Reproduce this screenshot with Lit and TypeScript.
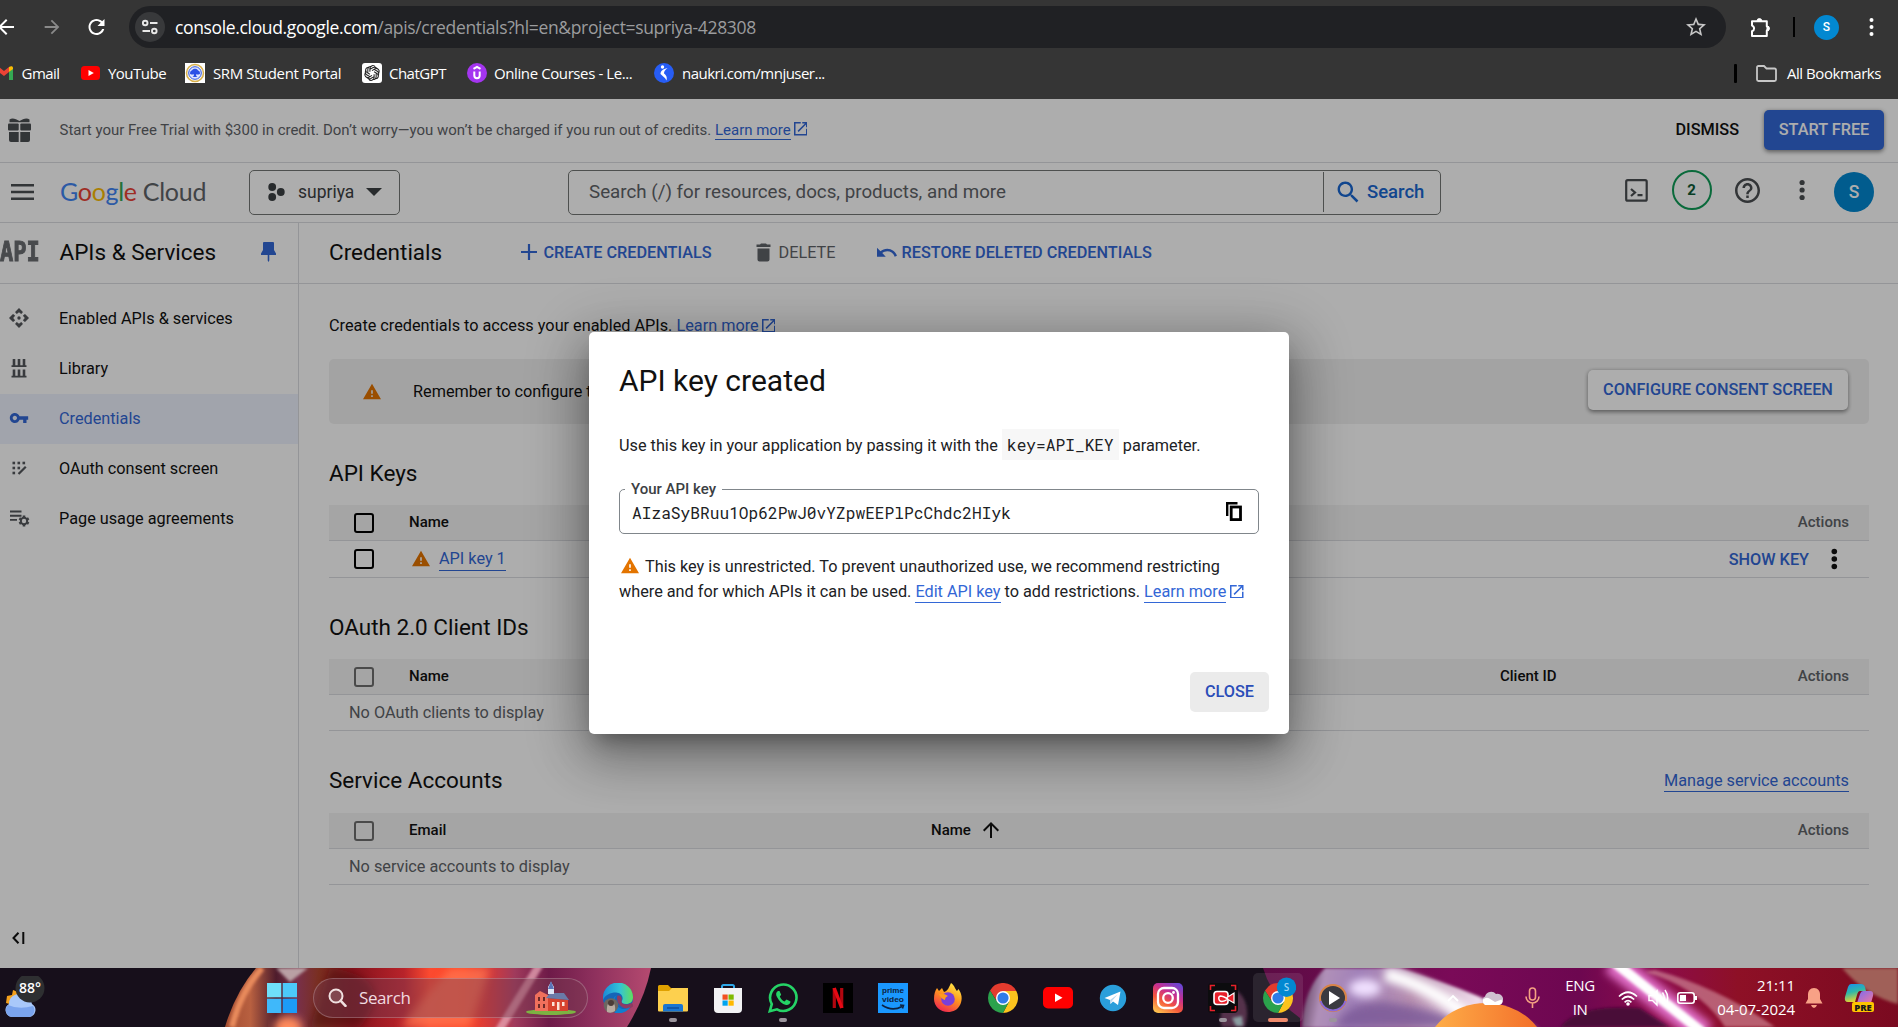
import { LitElement, html, css, svg } from "lit";
import { customElement } from "lit/decorators.js";

const P = {
  back: "M20 11H7.83l5.59-5.59L12 4l-8 8 8 8 1.41-1.41L7.83 13H20v-2z",
  forward: "M12 4l-1.41 1.41L16.17 11H4v2h12.17l-5.58 5.59L12 20l8-8z",
  reload:
    "M17.65 6.35C16.2 4.9 14.21 4 12 4c-4.42 0-7.99 3.58-7.99 8s3.57 8 7.99 8c3.73 0 6.84-2.55 7.73-6h-2.08c-.82 2.33-3.04 4-5.65 4-3.31 0-6-2.69-6-6s2.69-6 6-6c1.66 0 3.14.69 4.22 1.78L13 11h7V4l-2.35 2.35z",
  star: "M22 9.24l-7.19-.62L12 2 9.19 8.63 2 9.24l5.46 4.73L5.82 21 12 17.27 18.18 21l-1.63-7.03L22 9.24zM12 15.4l-3.76 2.27 1-4.28-3.32-2.88 4.38-.38L12 6.1l1.71 4.04 4.38.38-3.32 2.88 1 4.28L12 15.4z",
  open: "M19 19H5V5h7V3H3v18h18v-9h-2v7zM14 3v2h3.59l-9.83 9.83 1.41 1.41L19 6.41V10h2V3h-7z",
  warn: "M1 21h22L12 2 1 21zm12-3h-2v-2h2v2zm0-4h-2v-4h2v4z",
  key: "M12.65 10C11.83 7.67 9.61 6 7 6c-3.31 0-6 2.69-6 6s2.69 6 6 6c2.61 0 4.83-1.67 5.65-4H17v4h4v-4h2v-4H12.65zM7 14.6c-1.4 0-2.6-1.2-2.6-2.6s1.2-2.6 2.6-2.6 2.6 1.2 2.6 2.6-1.2 2.6-2.6 2.6z",
  trash: "M6 19c0 1.1.9 2 2 2h8c1.1 0 2-.9 2-2V8H6v11zM19 4h-3.5l-1-1h-5l-1 1H5v2.5h14V4z",
  search:
    "M15.5 14h-.79l-.28-.27C15.41 12.59 16 11.11 16 9.5 16 5.91 13.09 3 9.5 3S3 5.91 3 9.5 5.91 16 9.5 16c1.61 0 3.09-.59 4.23-1.57l.27.28v.79l5 4.99L20.49 19l-4.99-5zm-6 0C7.01 14 5 11.99 5 9.5S7.01 5 9.5 5 14 7.01 14 9.5 11.99 14 9.5 14z",
  undo: "M12.5 8c-2.65 0-5.05.99-6.9 2.6L2 7v9h9l-3.62-3.62c1.39-1.16 3.16-1.88 5.12-1.88 3.54 0 6.55 2.31 7.6 5.5l2.37-.78C21.08 11.03 17.15 8 12.5 8z",
  help: "M11 18h2v-2h-2v2zm1-16C6.48 2 2 6.48 2 12s4.48 10 10 10 10-4.48 10-10S17.52 2 12 2zm0 18c-4.41 0-8-3.59-8-8s3.59-8 8-8 8 3.59 8 8-3.59 8-8 8zm0-14c-2.21 0-4 1.79-4 4h2c0-1.1.9-2 2-2s2 .9 2 2c0 2-3 1.75-3 5h2c0-2.25 3-2.5 3-5 0-2.21-1.79-4-4-4z",
  up: "M4 12l1.41 1.41L11 7.83V20h2V7.83l5.58 5.59L20 12l-8-8-8 8z",
};

const icon = (d: string, size: number, box = "0 0 24 24") =>
  html`<svg class="ic" width=${size} height=${size} viewBox=${box}><path fill="currentColor" fill-rule="evenodd" d=${d} /></svg>`;

const art = (w: number, h: number, box: string, body: unknown) =>
  html`<svg class="ic" width=${w} height=${h} viewBox=${box}>${body}</svg>`;

const dots = (h: number, r: number, gap: number) =>
  art(2 * r + 1, h, `${-r - 0.5} ${-h / 2} ${2 * r + 1} ${h}`, svg`
    <circle cy=${-gap} r=${r} fill="currentColor"/><circle r=${r} fill="currentColor"/><circle cy=${gap} r=${r} fill="currentColor"/>`);

const chromeBody = svg`
  <path d="M15 8 H28.3 A15 15 0 0 0 2.01 7.5 L9 18.5 Z" fill="#e33b2e"/>
  <path d="M21.1 18.5 L15 30 A15 15 0 0 0 28.3 8 H15 Z" fill="#fcc31e"/>
  <path d="M8.9 18.5 L2.01 7.5 A15 15 0 0 0 15 30 L21.1 18.5 Z" fill="#2ba24c"/>
  <circle cx="15" cy="15" r="7" fill="#fff"/><circle cx="15" cy="15" r="5.6" fill="#2f7ce8"/>`;

const extLink = (text: string) =>
  html`<a class="link">${text}</a><span class="ext">${icon(P.open, 13.5, "3 3 18 18")}</span>`;

@customElement("browser-chrome")
class BrowserChrome extends LitElement {
  static styles = css`
    :host {
      display: block;
      height: 99px;
      background: #353535;
      color: #fff;
      font-family: "Open Sans", "Noto Sans", sans-serif;
      white-space: nowrap;
    }
    .ic { display: block; }
    .bar {
      display: grid;
      grid-template-columns: 44px 43px 42px 1597px 24px 43px 21px 55px 1fr;
      align-items: center;
      height: 42px;
      padding-top: 6px;
    }
    .bar .back { margin-left: -6px; }
    .dim { color: #8a8a8a; margin-left: -3px; }
    .reload { margin-left: -1px; }
    .omni {
      display: grid;
      grid-template-columns: 30px 1505px 1fr;
      align-items: center;
      box-sizing: border-box;
      height: 42px;
      border-radius: 21px;
      padding-left: 6px;
      background: #202124;
    }
    .site {
      display: grid;
      place-items: center;
      width: 30px;
      height: 30px;
      border-radius: 50%;
      background: #38393b;
    }
    .url {
      padding-left: 10px;
      font-size: 17.5px;
      letter-spacing: -0.35px;
      line-height: 24px;
    }
    .url .rest { color: #9b9c9e; }
    .omni .star { color: #c7c7c7; margin-left: 16px; }
    .sep { width: 2px; height: 20px; background: #000; }
    .marks .sep { width: 3px; height: 19px; border-radius: 1px; }
    .ava {
      display: grid;
      place-items: center;
      width: 25px;
      height: 25px;
      border-radius: 50%;
      background: #0288d1;
      font: 500 12px Roboto, sans-serif;
    }
    .marks {
      display: grid;
      grid-template-columns: 21.5px 59.5px 27px 77px 28px 149px 27px 78px 27px 160px 28px 1052px 22px 31px 1fr;
      align-items: center;
      height: 51px;
      box-sizing: border-box;
      padding-bottom: 1px;
      font-size: 15px;
      letter-spacing: -0.52px;
    }
    .marks .cut { margin-left: -5px; }
    .marks .wide { letter-spacing: -0.4px; }
    .marks .last { letter-spacing: -0.46px; }
  `;
  render() {
    return html`
      <div class="bar">
        <span class="back">${icon(P.back, 24)}</span>
        <span class="dim">${icon(P.forward, 22)}</span>
        <span class="reload">${icon(P.reload, 23, "1.5 1 23 23")}</span>
        <div class="omni">
          <span class="site">${art(18, 16, "0 0 18 16", svg`<g fill="none" stroke="#e8e8e8" stroke-width="1.9"><circle cx="4.2" cy="4" r="2.3"/><path d="M9 4H16.5M1.5 12H9"/><circle cx="13.3" cy="12" r="2.3"/></g>`)}</span>
          <span class="url">console.cloud.google.com<span class="rest">/apis/credentials?hl=en&amp;project=supriya-428308</span></span>
          <span class="star">${icon(P.star, 20, "2 2 20 20")}</span>
        </div>
        <span></span>
        <span>${art(21, 22, "0 0 21 22", svg`<path d="M2 5.2H16.8V10.3A2.2 2.2 0 0 1 16.8 14.6V20H2V15.3A3 3 0 0 0 2 9.6Z" fill="none" stroke="#fff" stroke-width="2" stroke-linejoin="round"/><path d="M7 5A2.4 2.4 0 0 1 11.8 5Z" fill="#fff" stroke="#fff"/><path d="M17 10A2.4 2.4 0 0 1 17 14.8Z" fill="#fff" stroke="#fff"/>`)}</span>
        <span class="sep"></span>
        <span class="ava">S</span>
        <span>${dots(22, 2, 7)}</span>
      </div>
      <div class="marks">
        <span class="cut">${art(18, 14, "0 0 18 14", svg`<path d="M0 2V14H4V6Z" fill="#4285f4"/><path d="M14 6V14H18V2Z" fill="#34a853"/><path d="M0 2C0 0 2 -.5 4 1L9 5L14 1V6L9 10L0 3.5Z" fill="#ea4335"/><path d="M14 1C16-.5 18 0 18 2V3L14 6Z" fill="#fbbc04"/>`)}</span>
        <span>Gmail</span>
        <span>${art(19, 14, "0 0 19 14", svg`<rect width="19" height="14" rx="3.5" fill="#f00"/><path d="M7.5 4L12.8 7L7.5 10Z" fill="#fff"/>`)}</span>
        <span>YouTube</span>
        <span>${art(20, 20, "0 0 20 20", svg`<rect width="20" height="20" fill="#fff"/><circle cx="10" cy="10" r="8.5" fill="#f4f4f4" stroke="#d8b04a" stroke-width="1.5"/><circle cx="10" cy="10" r="6.3" fill="#dfe6ff" stroke="#3157e0" stroke-width="1"/><path d="M5 10.5C5 8 6.5 7.5 7 7.5C7.5 5.2 12.5 5.2 13 7.5C14 7.5 15 8.5 15 10.5C15 11.5 12 12 11.2 11V13L12.5 14H7.5L8.8 13V11C8 12 5 11.5 5 10.5Z" fill="#2a50e6"/>`)}</span>
        <span class="wide">SRM Student Portal</span>
        <span>${art(20, 20, "0 0 20 20", svg`<rect width="20" height="20" rx="3" fill="#fff"/><g fill="none" stroke="#222" stroke-width="1.05">${[0, 60, 120, 180, 240, 300].map((a) => svg`<path transform="rotate(${a} 10 10)" d="M7.9 8.8V5.2A2.9 2.9 0 0 1 13.2 3.9M7.9 6.4L11.2 4.5A2.9 2.9 0 0 1 15.3 6.2"/>`)}</g>`)}</span>
        <span>ChatGPT</span>
        <span>${art(20, 20, "0 0 20 20", svg`<circle cx="10" cy="10" r="10" fill="#a435f0"/><path d="M6.5 5.8L10 3.8L13.5 5.8M7.3 8.5V12.5A2.7 2.7 0 0 0 12.7 12.5V8.5" fill="none" stroke="#fff" stroke-width="2"/>`)}</span>
        <span class="wide">Online Courses - Le...</span>
        <span>${art(20, 20, "0 0 20 20", svg`<circle cx="10" cy="10" r="10" fill="#275df5"/><circle cx="8.5" cy="4" r="1.7" fill="#fff"/><path d="M13.5 5C9 6 6.5 8 6.5 11C8 13 11 14 12.5 17.5C13.5 14 12 12 10 10.5C10 8.5 11 7 13.5 5Z" fill="#fff"/>`)}</span>
        <span>naukri.com/mnjuser...</span>
        <span class="sep"></span>
        <span>${art(21, 17, "0 0 21 17", svg`<path d="M1 3V14.5Q1 16 2.5 16H18.5Q20 16 20 14.5V5Q20 3.5 18.5 3.5H10.5L8 1H2.5Q1 1 1 2.5Z" fill="none" stroke="#c7c7c7" stroke-width="1.8"/>`)}</span>
        <span class="last">All Bookmarks</span>
      </div>
    `;
  }
}

@customElement("cloud-console")
class CloudConsole extends LitElement {
  static styles = css`
    :host {
      display: block;
      position: relative;
      height: 869px;
      overflow: hidden;
      background: #fff;
      color: #111;
      font-family: Roboto, sans-serif;
      font-size: 16.25px;
      white-space: nowrap;
    }
    .ic { display: block; }
    .link {
      color: #3367d6;
      line-height: 1.25;
      display: inline-block;
      border-bottom: 1.25px solid #3367d6;
    }
    .ext { display: inline-block; vertical-align: -1px; margin-left: 3px; color: #3367d6; }
    .blue { color: #3367d6; }
    .gray { color: #5f6368; }
    .med { font-weight: 500; }

    .promo {
      display: grid;
      grid-template-columns: 51.5px 1616px 88.5px 120px;
      align-items: center;
      height: 63px;
      padding: 0 14px 0 8px;
      border-bottom: 1px solid #dadce0;
    }
    .promo > * { margin-top: -2px; }
    .promo .msg { color: #5f6368; font-size: 14.98px; margin-top: 0; }
    .btn {
      display: grid;
      place-items: center;
      box-sizing: border-box;
      height: 40px;
      border-radius: 5px;
      font-weight: 500;
      box-shadow: 0 1.5px 4px rgba(0, 0, 0, 0.45);
    }
    .start { background: #3367d6; color: #fff; }

    .top {
      display: grid;
      grid-template-columns: 49px 189px 151px 168.5px 872px 184px 47px 63px 64.5px 35px 40px;
      align-items: center;
      height: 60px;
      padding: 0 0 1px 11px;
      box-sizing: border-box;
      border-bottom: 1px solid #dadce0;
    }
    .logo {
      font-family: Lato, sans-serif;
      font-size: 25px;
      letter-spacing: -0.3px;
      color: #5f6368;
      margin-top: -2px;
    }
    .g1 { color: #4285f4; } .g2 { color: #ea4335; } .g3 { color: #fbbc04; } .g4 { color: #34a853; }
    .pick {
      display: grid;
      grid-template-columns: 30px 68px 1fr;
      align-items: center;
      box-sizing: border-box;
      height: 45px;
      padding: 0 0 1px 18px;
      border: 1.25px solid #747775;
      border-radius: 5px;
      font-size: 17.5px;
      color: #3c4043;
    }
    .find {
      display: grid;
      grid-template-columns: 754px 1fr;
      align-items: center;
      box-sizing: border-box;
      height: 45px;
      margin-left: -0.5px;
      border: 1.25px solid #747775;
      border-radius: 5px;
      font-size: 18.75px;
    }
    .find .ph { padding-left: 20px; color: #5f6368; }
    .find .go {
      display: flex;
      align-items: center;
      gap: 8px;
      height: 40px;
      padding: 0 0 1px 13px;
      box-sizing: border-box;
      border-left: 1.25px solid #747775;
      color: #1a67d2;
      font-weight: 500;
      font-size: 18.5px;
    }
    .tools { color: #4b4e52; }
    .count {
      display: grid;
      place-items: center;
      box-sizing: border-box;
      width: 40px;
      height: 40px;
      border: 2.5px solid #0f9d58;
      border-radius: 50%;
      color: #0b5a35;
      font-weight: 700;
      font-size: 15px;
    }
    .up1 { margin-top: -4px; }
    .me {
      display: grid;
      place-items: center;
      width: 40px;
      height: 40px;
      border-radius: 50%;
      background: #0288d1;
      color: #fff;
      font-size: 17.5px;
      font-weight: 500;
    }

    .body { display: grid; grid-template-columns: 299px 1fr; height: 745px; }
    .side { display: flex; flex-direction: column; border-right: 1px solid #dadce0; }
    .head {
      display: grid;
      align-items: center;
      height: 61px;
      box-sizing: border-box;
      padding-bottom: 2.5px;
      border-bottom: 1px solid #dadce0;
    }
    .side .head { grid-template-columns: 59.5px 201px 1fr; }
    .api {
      font: 700 22px "DejaVu Sans Mono", monospace;
      color: #6b6e72;
      -webkit-text-stroke: 0.8px #6b6e72;
      transform: scaleY(1.2);
    }
    .h1 { font-size: 22.5px; }
    .nav {
      display: grid;
      grid-template-columns: 50px 1fr;
      align-items: center;
      height: 50px;
      box-sizing: border-box;
      padding: 0 0 2px 9px;
    }
    .nav .ic { color: #55585c; }
    .first { margin-top: 10px; }
    .nav.on { background: #edf2fe; color: #3367d6; }
    .nav.on .ic { color: #3367d6; }
    .fold { margin: auto 0 24px 12px; }

    .main .head {
      grid-template-columns: 190.5px 24px 211px 24px 98px 25px 1fr;
      padding-left: 30px;
      padding-bottom: 1.5px;
    }
    .main .h1 { margin-top: -1px; }
    .head .nudge { margin-left: 1.5px; }
    .sheet { display: flex; flex-direction: column; padding: 0 29px 0 30px; }
    .intro { height: 75px; box-sizing: border-box; padding-top: 32px; }
    .note {
      display: grid;
      grid-template-columns: 50px 1175px 260px;
      align-items: center;
      box-sizing: border-box;
      height: 65px;
      padding-left: 34px;
      border-radius: 5px;
      background: #f1f1f1;
    }
    .note .btn { background: #fff; margin-top: -4px; padding-bottom: 1px; }
    .warn { color: #e37400; }
    .sec {
      display: flex;
      justify-content: space-between;
      align-items: center;
      height: 81px;
      box-sizing: border-box;
      padding: 16px 20px 0 0;
      font-size: 22.5px;
    }
    .sec.last { height: 82px; }
    .sec .link { font-size: 16.25px; margin-top: 3px; }
    .th, .tr {
      display: grid;
      grid-template-columns: 55px 522px 569px 1fr;
      align-items: center;
      height: 35px;
      padding: 0 20px 0 25px;
      border-bottom: 1px solid #dadce0;
    }
    .th { background: #f3f3f3; font-weight: 500; font-size: 15px; }
    .th.ids { grid-template-columns: 55px 1091px 1fr auto; }
    .th > span { margin-top: -2px; }
    .tr { grid-template-columns: 58px 27px 1fr auto 18px; }
    .tr.tall { height: 36px; }
    .tr.none { grid-template-columns: 1fr; padding-left: 20px; color: #5f6368; }
    .tr .show { margin-right: 22px; }
    .tr.tall .warn { margin-top: -1px; }
    .tr .name { padding-top: 2px; }
    .th .gray { text-align: right; }
    .sort { display: flex; align-items: center; gap: 12px; }
    .box {
      box-sizing: border-box;
      width: 20px;
      height: 20px;
      border: 2.5px solid #000;
      border-radius: 3px;
    }
    .th .box { margin-top: 1px; }
    .box.off { border-color: #6e6e6e; }

    .shade { position: absolute; inset: 0; background: rgba(0, 0, 0, 0.32); }
    .dialog {
      position: absolute;
      left: 589px;
      top: 233px;
      display: flex;
      flex-direction: column;
      box-sizing: border-box;
      width: 700px;
      height: 402px;
      padding: 0 30px;
      border-radius: 5px;
      background: #fff;
      color: #202124;
      box-shadow: 0 14px 19px -9px rgba(0, 0, 0, 0.3), 0 20px 48px 4px rgba(0, 0, 0, 0.24),
        0 11px 58px 10px rgba(0, 0, 0, 0.2);
    }
    .dialog h2 { margin: 29px 0 0; font-size: 30px; font-weight: 400; line-height: 40px; color: #111; }
    .dialog p { margin: 28px 0 0; line-height: 31px; }
    .chip {
      display: inline-block;
      padding: 0 5px;
      background: #f7f7f7;
    }
    .mono { font-family: "Roboto Mono", "DejaVu Sans Mono", monospace; font-size: 16.2px; }
    .field {
      height: 54px;
      margin: 19px 0 0;
      padding: 0 16px 0 12px;
      border: 1.25px solid #80868b;
      border-radius: 5px;
      box-sizing: border-box;
      min-width: 0;
    }
    .field legend { margin-left: -7px; padding: 0 6px; font-size: 15px; font-weight: 500; line-height: 18px; color: #3c4043; }
    .field .row { display: flex; justify-content: space-between; align-items: center; height: 28px; }
    .field .ic { margin-top: -2px; }
    .dialog .tip { margin-top: 20px; line-height: 25px; }
    .tip .warn { display: inline-block; vertical-align: -3px; margin: 0 6px 0 2px; }
    .tip .link { line-height: 20px; }
    .tip .ext { margin-left: 4px; }
    .close {
      align-self: flex-end;
      display: grid;
      place-items: center;
      box-sizing: border-box;
      width: 79px;
      height: 40px;
      padding-bottom: 1px;
      margin: auto -10px 22px 0;
      border-radius: 5px;
      background: #ebebeb;
      color: #2a4db8;
      font-weight: 500;
    }
  `;
  render() {
    return html`
      <div class="promo">
        <span class="gray">${art(23, 24, "0 0 23 24", svg`<g fill="#4b4e52"><path d="M1.5 1.5Q4-.5 8 1.2L11.5 3L15 1.2Q19-.5 21.5 1.5V4.2H1.5Z"/><rect y="5.6" width="10.7" height="7" rx="1"/><rect x="12.3" y="5.6" width="10.7" height="7" rx="1"/><path d="M1 14H10.7V24H3Q1 24 1 22ZM12.3 14H22V22Q22 24 20 24H12.3Z"/></g>`)}</span>
        <span class="msg">Start your Free Trial with $300 in credit. Don’t worry—you won’t be charged if you run out of credits. ${extLink("Learn more")}</span>
        <span class="med">DISMISS</span>
        <span class="btn start">START FREE</span>
      </div>
      <div class="top">
        <span class="tools">${art(23, 16, "0 0 23 16", svg`<path d="M0 1.2H23M0 8H23M0 14.8H23" stroke="currentColor" stroke-width="2.5"/>`)}</span>
        <span class="logo"><span class="g1">G</span><span class="g2">o</span><span class="g3">o</span><span class="g1">g</span><span class="g4">l</span><span class="g2">e</span> Cloud</span>
        <span class="pick">
          ${art(17, 18, "0 0 17 18", svg`<g fill="#3c4043"><circle cx="4.2" cy="4" r="3.9"/><circle cx="4.2" cy="14" r="3.9"/><circle cx="12.8" cy="9" r="3.9"/></g>`)}
          <span>supriya</span>
          ${art(16, 8, "0 0 16 8", svg`<path d="M0 0H16L8 8Z" fill="#3c4043"/>`)}
        </span>
        <span></span>
        <span class="find"><span class="ph">Search (/) for resources, docs, products, and more</span><span class="go">${icon(P.search, 22, "2.5 2.5 18.5 18.5")}Search</span></span>
        <span></span>
        <span class="tools up1">${art(23, 23, "0 0 23 23", svg`<rect x="1.2" y="1.2" width="20.5" height="20.5" rx="1.5" fill="none" stroke="currentColor" stroke-width="2.2"/><path d="M6 10L10 13.5L6 17M12.5 16.2H17.5" fill="none" stroke="currentColor" stroke-width="2.2"/>`)}</span>
        <span class="count up1">2</span>
        <span class="tools up1">${icon(P.help, 25, "2 2 20 20")}</span>
        <span class="tools up1">${dots(22, 2.6, 7.5)}</span>
        <span class="me">S</span>
      </div>
      <div class="body">
        <div class="side">
          <div class="head">
            <span class="api">API</span>
            <span class="h1">APIs &amp; Services</span>
            <span>${art(15, 20, "0 0 15 20", svg`<path d="M3 0H12Q13 0 13 1V8L15 11.5V13H8.3V18.5L7.5 20L6.7 18.5V13H0V11.5L2 8V1Q2 0 3 0Z" fill="#3367d6"/>`)}</span>
          </div>
          <div class="nav first">${art(20, 20, "0 0 20 20", svg`<g fill="currentColor">${[0, 90, 180, 270].map((a) => svg`<path transform="rotate(${a} 10 10)" d="M10 0L13.7 3.7V4.6L12.2 6.1L10 4.2L7.8 6.1L6.3 4.6V3.7Z"/>`)}<circle cx="10" cy="10" r="1.7"/></g>`)}<span>Enabled APIs &amp; services</span></div>
          <div class="nav">${art(20, 20, "0 0 20 20", svg`<g stroke="currentColor" fill="none"><path d="M2.5 8.2H17.5M2.5 18.7H17.5" stroke-width="1.8"/><path d="M5 1V8M10 1V8M15 1V8M5 11.5V18.5M10 11.5V18.5M15 11.5V18.5" stroke-width="2.6"/></g>`)}<span>Library</span></div>
          <div class="nav on">${icon(P.key, 20)}<span>Credentials</span></div>
          <div class="nav">${art(20, 20, "0 0 20 20", svg`<g fill="currentColor">${[[4.8, 5], [9.8, 5], [14.8, 5], [4.8, 10], [9.8, 10], [4.8, 15]].map(([x, y]) => svg`<rect x=${x - 1.3} y=${y - 1.3} width="2.6" height="2.6"/>`)}</g><path d="M9.5 16L16.8 8.7" stroke="currentColor" stroke-width="2.2"/>`)}<span>OAuth consent screen</span></div>
          <div class="nav">${art(21, 18, "0 0 21 18", svg`<path d="M1 2.5H12.5M1 6.7H12.5M1 10.9H8" stroke="currentColor" stroke-width="1.9"/><circle cx="15" cy="12" r="3.2" fill="none" stroke="currentColor" stroke-width="2"/><path d="M15 6.5V8.5M15 15.5V17.5M10.3 9.3L12 10.3M18 13.7L19.7 14.7M10.3 14.7L12 13.7M18 10.3L19.7 9.3" stroke="currentColor" stroke-width="2.6"/>`)}<span>Page usage agreements</span></div>
          <div class="fold">${art(13, 12, "0 0 13 12", svg`<path d="M6.5 .8L1.5 6L6.5 11.2M11.3 0V12" fill="none" stroke="#111" stroke-width="2"/>`)}</div>
        </div>
        <div class="main">
          <div class="head">
            <span class="h1">Credentials</span>
            <span class="blue nudge">${art(16, 16, "0 0 16 16", svg`<path d="M8 0V16M0 8H16" stroke="currentColor" stroke-width="2.2"/>`)}</span>
            <span class="blue med">CREATE CREDENTIALS</span>
            <span class="gray nudge">${icon(P.trash, 19, "4.5 2.5 19 19")}</span>
            <span class="gray">DELETE</span>
            <span class="blue">${icon(P.undo, 20, "2 1 20.5 20.5")}</span>
            <span class="blue med">RESTORE DELETED CREDENTIALS</span>
          </div>
          <div class="sheet">
            <div class="intro">Create credentials to access your enabled APIs. ${extLink("Learn more")}</div>
            <div class="note">
              <span class="warn">${icon(P.warn, 18, "1 1 22 22")}</span>
              <span>Remember to configure the</span>
              <span class="btn blue">CONFIGURE CONSENT SCREEN</span>
            </div>
            <div class="sec">API Keys</div>
            <div class="th"><span class="box"></span><span>Name</span><span></span><span class="gray">Actions</span></div>
            <div class="tr tall">
              <span class="box"></span><span class="warn">${icon(P.warn, 18, "1 1 22 22")}</span>
              <span class="name"><a class="link">API key 1</a></span>
              <span class="blue med show">SHOW KEY</span><span>${dots(22, 2.8, 7.5)}</span>
            </div>
            <div class="sec">OAuth 2.0 Client IDs</div>
            <div class="th ids"><span class="box off"></span><span>Name</span><span>Client ID</span><span class="gray">Actions</span></div>
            <div class="tr none">No OAuth clients to display</div>
            <div class="sec last">Service Accounts<a class="link">Manage service accounts</a></div>
            <div class="th"><span class="box off"></span><span>Email</span><span class="sort">Name ${icon(P.up, 16, "4 4 16 16")}</span><span class="gray">Actions</span></div>
            <div class="tr none">No service accounts to display</div>
          </div>
        </div>
      </div>
      <div class="shade"></div>
      <div class="dialog">
        <h2>API key created</h2>
        <p>Use this key in your application by passing it with the <span class="chip mono">key=API_KEY</span> parameter.</p>
        <fieldset class="field">
          <legend>Your API key</legend>
          <div class="row"><span class="mono">AIzaSyBRuu1Op62PwJ0vYZpwEEPlPcChdc2HIyk</span>${art(16, 19, "0 0 16 19", svg`<path d="M1.2 14V1.2H11.5" fill="none" stroke="#000" stroke-width="2.4"/><rect x="5.2" y="5" width="9.3" height="12.6" fill="none" stroke="#000" stroke-width="2.8"/>`)}</div>
        </fieldset>
        <p class="tip"><span class="warn">${icon(P.warn, 18, "1 1 22 22")}</span>This key is unrestricted. To prevent unauthorized use, we recommend restricting<br />where and for which APIs it can be used. <a class="link">Edit API key</a> to add restrictions. ${extLink("Learn more")}</p>
        <div class="close">CLOSE</div>
      </div>
    `;
  }
}

@customElement("task-bar")
class TaskBar extends LitElement {
  static styles = css`
    :host {
      display: block;
      position: relative;
      height: 59px;
      background: #170f1b;
      color: #fff;
      font-family: "Open Sans", "Noto Sans", sans-serif;
      white-space: nowrap;
    }
    .wall { position: absolute; inset: 0; display: block; }
    .ic { display: block; }
    .row {
      position: relative;
      display: grid;
      grid-template-columns: 262px 46px 290px repeat(12, 55px) 55px 129px 35px 43px 40px 53px 30px 29px 40px 78px 49px 1fr;
      align-items: center;
      height: 59px;
      padding-left: 5px;
      box-sizing: border-box;
    }
    .pill {
      display: grid;
      grid-template-columns: 31px 167px 1fr;
      align-items: center;
      box-sizing: border-box;
      width: 275px;
      height: 40px;
      padding-left: 14px;
      border: 1px solid rgba(255, 255, 255, 0.22);
      border-radius: 20px;
      background: rgba(120, 60, 80, 0.45);
      font-size: 17px;
      color: #f1dbe0;
      letter-spacing: -0.4px;
    }
    .app {
      display: grid;
      justify-items: center;
      align-items: center;
      width: 30px;
      grid-template-rows: 30px 5px 4px;
      margin-top: 10px;
    }
    .run { grid-row: 3; width: 8px; height: 4px; border-radius: 2px; background: #9b949c; }
    .tile {
      display: grid;
      grid-template-rows: 30px 5px 4px;
      justify-items: center;
      box-sizing: border-box;
      width: 50px;
      height: 49px;
      padding-top: 10px;
      border-radius: 5px;
      background: rgba(255, 255, 255, 0.09);
      margin-left: -10px;
    }
    .tile .ic { margin-top: -6px; }
    .wide { grid-row: 3; width: 20px; height: 4px; border-radius: 2px; background: #f08a6c; }
    .lang, .time { font-size: 15px; line-height: 24px; margin-top: -2px; }
    .lang { text-align: center; width: 30px; letter-spacing: -0.4px; }
    .time { text-align: right; width: 78px; letter-spacing: -0.05px; }
    .bell { padding-left: 10px; }
    .brand { font-family: "Liberation Sans", Arial, sans-serif; font-size: 7.3px; font-weight: 700; }
  `;
  app(body: unknown, run = false, box = "0 0 30 30") {
    return html`<span class="app">${art(30, 30, box, body)}${run ? html`<span class="run"></span>` : ""}</span>`;
  }
  render() {
    return html`
      <svg class="wall" width="1898" height="59" viewBox="0 0 1898 59">
        <defs>
          <linearGradient id="l" gradientUnits="userSpaceOnUse" x1="225" x2="651" y1="0" y2="0">
            <stop offset="0" stop-color="#a34c30"/><stop offset=".06" stop-color="#b86040"/><stop offset=".12" stop-color="#4e1c2c"/><stop offset=".17" stop-color="#78304a"/><stop offset=".22" stop-color="#7a2f20"/>
            <stop offset=".3" stop-color="#85121c"/><stop offset=".42" stop-color="#b8232a"/><stop offset=".48" stop-color="#fb4a30"/><stop offset=".56" stop-color="#ff4526"/><stop offset=".62" stop-color="#d53a3a"/>
            <stop offset=".68" stop-color="#a03a5c"/><stop offset=".76" stop-color="#6e1a48"/><stop offset=".86" stop-color="#8c2f5c"/><stop offset="1" stop-color="#b54a70"/>
          </linearGradient>
          <linearGradient id="r" gradientUnits="userSpaceOnUse" x1="1260" x2="1898" y1="0" y2="0">
            <stop offset="0" stop-color="#5c0c44"/><stop offset=".3" stop-color="#7a0a58"/><stop offset=".5" stop-color="#6d0750"/><stop offset=".62" stop-color="#8c0c4c"/><stop offset=".75" stop-color="#8e1026"/><stop offset="1" stop-color="#7a0a20"/>
          </linearGradient>
          <linearGradient id="s" gradientUnits="userSpaceOnUse" x1="1302" x2="1520" y1="10" y2="50">
            <stop offset="0" stop-color="#5a3a58"/><stop offset=".1" stop-color="#b090b8"/><stop offset=".25" stop-color="#a080b8"/><stop offset=".5" stop-color="#b890b0"/><stop offset=".8" stop-color="#f0dcec"/><stop offset="1" stop-color="#8a4080"/>
          </linearGradient>
          <linearGradient id="o" x1="0" x2="1"><stop offset="0" stop-color="#ffb24a"/><stop offset="1" stop-color="#f26a28"/></linearGradient>
          <filter id="b" x="-20%" y="-50%" width="140%" height="200%"><feGaussianBlur stdDeviation="4"/></filter>
          <filter id="b2" x="-20%" y="-50%" width="140%" height="200%"><feGaussianBlur stdDeviation="1.5"/></filter>
          <clipPath id="cl"><path d="M256 0Q235 25 225 59H627Q645 30 651 0Z"/></clipPath>
          <clipPath id="cr"><path d="M1263 0Q1272 30 1300 50V59H1898V0Z"/></clipPath>
        </defs>
        <g clip-path="url(#cl)">
          <rect x="225" width="430" height="59" fill="url(#l)"/>
          <path d="M262 0Q240 25 232 59" stroke="#e88a5c" stroke-width="6" fill="none" filter="url(#b2)"/>
          <path d="M276 0H308L290 14Z" fill="#b9a0a4" filter="url(#b2)"/>
          <ellipse cx="288" cy="60" rx="14" ry="12" fill="#ff8a5c" filter="url(#b)"/>
          <path d="M330 0Q400 10 360 59H310Z" fill="#4a0c10" opacity=".55" filter="url(#b)"/>
          <path d="M400 59L450 0H490L470 59Z" fill="#ff7a55" opacity=".7" filter="url(#b)"/>
          <path d="M540-4L498 64" stroke="#e8a8b8" stroke-width="8" opacity=".75" filter="url(#b2)"/>
        </g>
        <g clip-path="url(#cr)">
          <rect x="1255" width="650" height="59" fill="url(#r)"/>
          <path d="M1325 0Q1303 22 1302 60H1540Q1500 32 1400 0Z" fill="url(#s)" filter="url(#b2)"/>
          <path d="M1335 59Q1345 34 1385 34Q1440 40 1470 60Z" fill="#7c5a98" opacity=".85" filter="url(#b)"/>
          <ellipse cx="1365" cy="20" rx="16" ry="9" fill="#f0e0ff" filter="url(#b)"/>
          <path d="M1385 6Q1425 16 1465 46" stroke="#fff" stroke-width="14" fill="none" filter="url(#b)"/>
          <ellipse cx="1486" cy="86" rx="60" ry="51" fill="url(#o)"/>
          <path d="M1560 59Q1580 35 1640 40L1670 59Z" fill="#4a0838" filter="url(#b2)"/>
          <path d="M1612-6L1705 66" stroke="#e070c8" stroke-width="24" filter="url(#b)"/>
          <path d="M1614-6L1702 64" stroke="#fff" stroke-width="10" filter="url(#b2)"/>
          <path d="M1655 2Q1720 20 1775 59H1725Q1700 20 1645 4Z" fill="#d08a98" opacity=".65" filter="url(#b2)"/>
          <path d="M1842 0Q1866 28 1898 36V0Z" fill="#a06058" filter="url(#b2)"/>
        </g>
        <path d="M1222 59Q1216 40 1236 22Q1252 34 1245 59Z" fill="#54304c" filter="url(#b2)"/>
        <path d="M1232 50L1242 48L1243 58H1236Z" fill="#8a9ca0" filter="url(#b2)"/>
      </svg>
      <div class="row">
        <span>${art(42, 44, "0 0 42 44", svg`<path d="M2 20L7 19L8 14L13 16L18 20L8 29L1 27Z" fill="#f5a11c"/><path d="M7 41A7 7 0 0 1 4 28A10 10 0 0 1 22 22A8 8 0 0 1 27 28A7 7 0 0 1 24 41Z" fill="#a9c8fa"/><path d="M7 41A7 7 0 0 1 3 29Q14 34 28 30A7 7 0 0 1 24 41Z" fill="#7ba4ee"/><circle cx="25" cy="12" r="14.5" fill="#2e2f31"/><text x="25" y="17" text-anchor="middle" font-size="14" font-weight="600" fill="#fff">88°</text>`)}</span>
        <span>${art(30, 30, "0 0 30 30", svg`<rect width="14.3" height="14.3" fill="#6fe0fb"/><rect x="15.7" width="14.3" height="14.3" fill="#4cc9fa"/><rect y="15.7" width="14.3" height="14.3" fill="#3fb8fa"/><rect x="15.7" y="15.7" width="14.3" height="14.3" fill="#1c9bf7"/>`)}</span>
        <span class="pill">
          ${art(19, 19, "0 0 19 19", svg`<circle cx="8" cy="8" r="6.5" fill="rgba(255,255,255,.15)" stroke="#f0e0e0" stroke-width="2"/><path d="M12.8 12.8L17.5 17.8" stroke="#f0e0e0" stroke-width="2.6" stroke-linecap="round"/>`)}
          <span>Search</span>
          ${art(50, 34, "0 0 50 34", svg`<ellipse cx="25" cy="31" rx="25" ry="3" fill="#7cb342"/><path d="M9 30V14L14 10L22 14V30Z" fill="#f0705c"/><path d="M22 30V17L42 19V30Z" fill="#d8432f"/><path d="M20 17L24 12H38L43 19Z" fill="#6a7aa8"/><path d="M22 13V6L25 1L28 6V13Z" fill="#dce4f4"/><path d="M22 8L25 0L28 8Z" fill="#5a74b8"/><g fill="#6c2a28"><rect x="12" y="16" width="2" height="4"/><rect x="17" y="16" width="2" height="4"/><rect x="12" y="23" width="2" height="4"/><rect x="17" y="23" width="2" height="4"/></g><g fill="#fbe3d8"><rect x="26" y="21" width="2.5" height="4"/><rect x="31" y="21" width="2.5" height="8"/><rect x="36" y="21" width="2.5" height="4"/></g>`)}
        </span>
        ${this.app(svg`<defs><linearGradient id="e1" x1="0" x2="1"><stop offset="0" stop-color="#1b8ad6"/><stop offset=".55" stop-color="#32c3d8"/><stop offset="1" stop-color="#62e05c"/></linearGradient></defs><circle cx="15" cy="15" r="15" fill="#1565b8"/><path d="M0 15A15 15 0 0 1 30 14C30 19 27 21 23 21C19 21 18 19 19 17.5C21 14 18 9.5 13 9.5C7 9.5 2 12 0 17Z" fill="url(#e1)"/><path d="M14.5 12.5C19 12 19 16 18.5 18C18 20.5 21 22 25 21.5L28.5 20L31 23L26 26C19 26 12 20 14.5 12.5Z" fill="#8f3a62"/><path d="M14 12C10 15 11 23 18 25.5Q22 27 27.5 24A15 15 0 0 1 12 29.7C8 24 8 15 14 12Z" fill="#0f7fd0"/><circle cx="8" cy="22.5" r="7.3" fill="#6c6660"/><path d="M4 29Q3 20 8 18Q13 20 12 28Q8 31 4 29Z" fill="#b8aaa0"/><circle cx="8" cy="20" r="3" fill="#4a3c38"/>`)}
        ${this.app(svg`<path d="M0 3.5Q0 2 1.5 2H10L13 5H28.5Q30 5 30 6.5V12H0Z" fill="#e0a100"/><path d="M0 8H11L14 5H30V27.5Q30 28.5 29 28.5H1Q0 28.5 0 27.5Z" fill="#fdd04e"/><path d="M5 28.5V23Q5 21 7 21H23Q25 21 25 23V28.5Z" fill="#1976d2"/><path d="M9 25H21" stroke="#0d4f9e" stroke-width="1.5"/>`, true)}
        ${this.app(svg`<path d="M9 6V3.5Q9 2 10.5 2H19.5Q21 2 21 3.5V6" fill="none" stroke="#2fa8e8" stroke-width="2"/><path d="M1 5H29V26Q29 30 25 30H5Q1 30 1 26Z" fill="#f2f2f4"/><rect x="9.5" y="11.5" width="5.2" height="5.2" fill="#f25022"/><rect x="15.5" y="11.5" width="5.2" height="5.2" fill="#7fba00"/><rect x="9.5" y="17.5" width="5.2" height="5.2" fill="#00a4ef"/><rect x="15.5" y="17.5" width="5.2" height="5.2" fill="#ffb900"/>`)}
        ${this.app(svg`<path d="M1.8 28.2L3.8 21.2A13.2 13.2 0 1 1 9 26.3Z" fill="none" stroke="#25d366" stroke-width="2.6"/><path d="M10 8C8 9 7.5 11.5 9 14C11 18 14 21 18 22C20 22.5 22.5 21 22.5 18.5L18.5 16.5L16.5 18.5C14.5 17.7 12.5 15.5 11.8 13.5L13.2 11.8L11.5 8Z" fill="#25d366"/>`, true)}
        ${this.app(svg`<rect width="30" height="30" fill="#000"/><path d="M11.3 5V25M18.7 5V25" stroke="#b1060f" stroke-width="3.2"/><path d="M11.2 5L18.8 25" stroke="#e50914" stroke-width="3.5"/>`)}
        ${this.app(svg`<rect width="30" height="30" fill="#1a98ff"/><text class="brand" x="15" y="10" text-anchor="middle" fill="#0d2240" textLength="22" lengthAdjust="spacingAndGlyphs">prime</text><text class="brand" x="15" y="19" text-anchor="middle" fill="#0d2240" textLength="22" lengthAdjust="spacingAndGlyphs">video</text><path d="M4 22Q14 29 24 23.5M22 22L25.5 22.5L24.5 25.5" fill="none" stroke="#0d2240" stroke-width="1.6"/>`)}
        ${this.app(svg`<defs><linearGradient id="f1" x1=".8" x2=".3" y1="0" y2="1"><stop offset="0" stop-color="#fff04a"/><stop offset=".45" stop-color="#ff9a1e"/><stop offset="1" stop-color="#f0264f"/></linearGradient></defs><path d="M18 0C22 3 22 6 24 8L25.5 6C29 11 29.5 16 27.5 21C25 27 20 29 15 29C7 29 1 23 1 16C1 11 2 8 4 5L6 8L9 5L11 9C15 8 16 4 18 0Z" fill="url(#f1)"/><circle cx="15" cy="16" r="6.8" fill="#7a3fd8"/><path d="M6 11Q11 10 15 13Q12 14 12 17Q8 16 6 11Z" fill="#ff9a1e"/>`)}
        ${this.app(chromeBody)}
        ${this.app(svg`<rect y="4" width="30" height="21.5" rx="5" fill="#f00"/><path d="M12 10.5L19.5 14.8L12 19Z" fill="#fff"/>`)}
        ${this.app(svg`<circle cx="15" cy="15" r="13.2" fill="#2a9fdb"/><path d="M6.5 15L22.5 8.5L20 22L15 18.5L12.5 21L12 17Z" fill="#fff"/><path d="M12 17L19.5 11.5L14 18L12.5 21Z" fill="#b8d8ee"/>`)}
        ${this.app(svg`<defs><linearGradient id="i1" x1=".2" x2=".8" y1="1" y2="0"><stop offset="0" stop-color="#fdc04e"/><stop offset=".35" stop-color="#f5563a"/><stop offset=".65" stop-color="#c92f8e"/><stop offset="1" stop-color="#6a45d4"/></linearGradient></defs><rect width="30" height="30" rx="5" fill="url(#i1)"/><rect x="5" y="5" width="20" height="20" rx="6" fill="none" stroke="#fff" stroke-width="2.3"/><circle cx="15" cy="15" r="4.8" fill="none" stroke="#fff" stroke-width="2.3"/><circle cx="20.5" cy="9.5" r="1.4" fill="#fff"/>`)}
        ${this.app(svg`<rect width="30" height="30" rx="4" fill="#0c0c0e"/><path d="M2.5 7V2.5H7M23 2.5H27.5V7M2.5 23V27.5H7M23 27.5H27.5V23" stroke="#e8202a" stroke-width="1.6" fill="none"/><rect x="6" y="8.5" width="14" height="13" rx="3" fill="#e8202a" stroke="#fff" stroke-width="1.6"/><path d="M19 14.5L26 10V20L19 16Z" fill="#e8202a" stroke="#fff" stroke-width="1.2"/><path d="M20 16Q14 20 11.5 17.5Q9.5 14 12.5 13Q15 13 20 16" fill="none" stroke="#fff" stroke-width="1.5"/>`, true)}
        <span class="tile">${art(36, 36, "-3 -6 36 36", svg`${chromeBody}<circle cx="23.5" cy="4.2" r="9.7" fill="#0288d1"/><text x="23.5" y="8" text-anchor="middle" font-size="10" font-weight="600" fill="#9fd4f4">S</text>`)}<span class="wide"></span></span>
        ${this.app(svg`<circle cx="15" cy="15" r="13" fill="#3a3a40" stroke="#d88448" stroke-width="2"/><path d="M2.5 18A13 13 0 0 0 27.5 18" fill="none" stroke="#8a68d8" stroke-width="2"/><path d="M11 8L22 15L11 22Z" fill="#fff"/>`, true)}
        <span>${art(12, 8, "0 0 12 8", svg`<path d="M1 7L6 2L11 7" fill="none" stroke="#fff" stroke-width="1.8"/>`)}</span>
        <span>${art(21, 14, "0 0 21 14", svg`<path d="M4 14A4.5 4.5 0 0 1 3 5.5A6.5 6.5 0 0 1 14 3A5.5 5.5 0 0 1 17 14Z" fill="#cfc0cf"/><path d="M3 14Q0 12 1 8.5Q5 5 9 8.5L13 11L19.5 8.5Q22 13 17 14Z" fill="#fff"/>`)}</span>
        <span>${art(15, 22, "0 0 15 22", svg`<rect x="4.5" y="1" width="6" height="12" rx="3" fill="none" stroke="#f5a182" stroke-width="1.6"/><path d="M1 9.5A6.5 6.5 0 0 0 14 9.5M7.5 16V21" fill="none" stroke="#f5a182" stroke-width="1.6"/>`)}</span>
        <span class="lang">ENG<br />IN</span>
        <span>${art(20, 16, "0 0 20 16", svg`<path d="M1 6.5Q10-2 19 6.5M3.8 9.5Q10 3.5 16.2 9.5M6.6 12.3Q10 9 13.4 12.3" fill="none" stroke="#fff" stroke-width="1.7"/><circle cx="10" cy="14" r="1.8" fill="#fff"/>`)}</span>
        <span>${art(21, 18, "0 0 21 18", svg`<path d="M1 6.5H4.5L9 2V16L4.5 11.5H1Z" fill="none" stroke="#fff" stroke-width="1.4"/><path d="M12 6Q14 9 12 12M14.5 3.5Q18 9 14.5 14.5M17 1Q22.5 9 17 17" fill="none" stroke="#fff" stroke-width="1.4"/>`)}</span>
        <span>${art(21, 12, "0 0 21 12", svg`<rect x=".8" y=".8" width="16.4" height="10.4" rx="2.5" fill="none" stroke="#fff" stroke-width="1.6"/><rect x="3" y="3" width="6" height="6" fill="#fff"/><path d="M19 4V8" stroke="#fff" stroke-width="2"/>`)}</span>
        <span class="time">21:11<br />04-07-2024</span>
        <span class="bell">${art(18, 20, "0 0 18 20", svg`<path d="M9 0C5 0 3 3 3 6.5V11L.5 15.5H17.5L15 11V6.5C15 3 13 0 9 0ZM6 17H12Q11 20 9 20Q7 20 6 17Z" fill="#f8a186"/>`)}</span>
        <span>${art(32, 30, "0 0 32 30", svg`<defs><linearGradient id="c1" x1="0" x2=".3" y1="0" y2="1"><stop offset="0" stop-color="#1a8cf0"/><stop offset=".5" stop-color="#2fb8a8"/><stop offset="1" stop-color="#e8d430"/></linearGradient><linearGradient id="c2" x1="0" x2="1" y1="0" y2="1"><stop offset="0" stop-color="#7a6cf0"/><stop offset="1" stop-color="#f078a0"/></linearGradient></defs><path d="M7 1H17Q20 1 21 4L22 8H16Q14 8 13 12L11 19H4Q0 19 1 14L4 4Q5 1 7 1Z" fill="url(#c1)"/><path d="M19 8H26Q30 8 29 13L27 20H13L16 11Q17 8 19 8Z" fill="url(#c2)"/><rect x="8" y="19" width="22" height="10" rx="2" fill="#ffc400"/><text x="19" y="27.5" text-anchor="middle" font-size="9.5" font-weight="800" fill="#1a1a1a">PRE</text>`)}</span>
      </div>
    `;
  }
}

@customElement("app-root")
class AppRoot extends LitElement {
  static styles = css`
    :host { display: block; width: 1898px; height: 1027px; overflow: hidden; }
  `;
  render() {
    return html`<browser-chrome></browser-chrome><cloud-console></cloud-console><task-bar></task-bar>`;
  }
}
